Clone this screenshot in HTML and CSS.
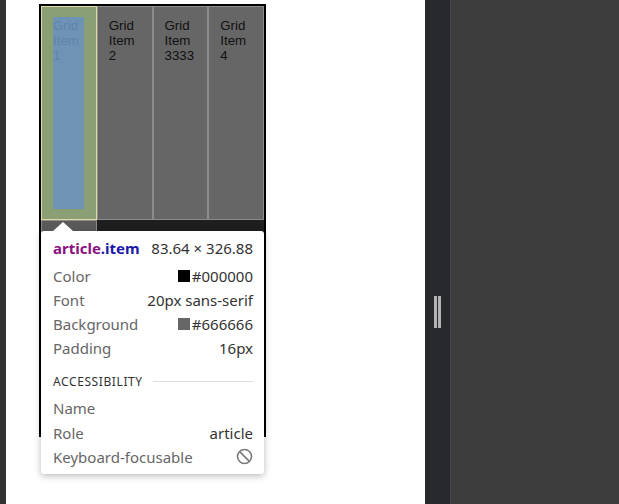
FILE: index.html
```html
<!DOCTYPE html>
<html lang="en">
<head>
<meta charset="utf-8">
<title>Grid inspector</title>
<link rel="stylesheet" href="styles.css">
</head>
<body>
<div class="screen">
  <div class="edge"></div>
  <div class="page">
    <section class="grid">
      <article class="item item--active"><div class="content">Grid Item 1</div></article>
      <article class="item"><div class="content">Grid Item 2</div></article>
      <article class="item"><div class="content">Grid Item 3333</div></article>
      <article class="item"><div class="content">Grid Item 4</div></article>
      <article class="item item--next"></article>
    </section>
    <div class="tooltip">
      <div class="tip-head">
        <span class="selector"><span class="tag">article</span><span class="cls">.item</span></span>
        <span class="size">83.64 × 326.88</span>
      </div>
      <div class="tip-row"><span class="label">Color</span><span class="value"><i class="swatch swatch--black"></i>#000000</span></div>
      <div class="tip-row"><span class="label">Font</span><span class="value">20px sans-serif</span></div>
      <div class="tip-row"><span class="label">Background</span><span class="value"><i class="swatch swatch--gray"></i>#666666</span></div>
      <div class="tip-row"><span class="label">Padding</span><span class="value">16px</span></div>
      <div class="tip-section"><span class="section-title">Accessibility</span><span class="rule"></span></div>
      <div class="tip-row tip-row--a11y"><span class="label">Name</span><span class="value"></span></div>
      <div class="tip-row"><span class="label">Role</span><span class="value">article</span></div>
      <div class="tip-row"><span class="label">Keyboard-focusable</span><span class="value">
        <svg class="no-icon" width="17" height="17" viewBox="0 0 17 17" aria-hidden="true">
          <circle cx="8.5" cy="8.5" r="7" fill="none" stroke="#7a7a7a" stroke-width="1.6"/>
          <line x1="3.6" y1="3.6" x2="13.4" y2="13.4" stroke="#7a7a7a" stroke-width="1.6"/>
        </svg>
      </span></div>
    </div>
  </div>
  <div class="splitter"><div class="handle"></div></div>
  <div class="devtools"></div>
</div>
</body>
</html>
```

FILE: styles.css
```css
* { box-sizing: border-box; }

html, body {
  margin: 0;
  padding: 0;
  width: 619px;
  height: 504px;
  overflow: hidden;
}

.screen {
  display: flex;
  width: 619px;
  height: 504px;
}

.edge {
  flex: 0 0 6px;
  background: #333333;
}

.page {
  flex: 0 0 419px;
  position: relative;
  background: #ffffff;
  padding: 4px 0 0 33px;
}

.grid {
  width: 227px;
  height: 433px;
  border: 2px solid #000000;
  background: #1e1e1e;
  display: grid;
  grid-template-columns: repeat(4, 1fr);
  grid-template-rows: 214px 1fr;
}

.item {
  border: 1px solid #8c8c8c;
  background: #666666;
  padding: 10px 12px 10px 11px;
  font-family: "Liberation Sans", Arial, sans-serif;
  font-size: 13.3px;
  line-height: 15px;
  color: #111111;
}

.content {
  height: 100%;
  padding-top: 1px;
}

.item--active {
  background: #8a9f74;
  border-color: #e2d9a2;
}

.item--active .content {
  background: #6f93b5;
  color: #5e84ad;
}

.item--next {
  background: #5a5a5a;
}

.tooltip {
  position: absolute;
  left: 35px;
  top: 231px;
  width: 223px;
  background: #ffffff;
  border-radius: 3px;
  box-shadow: 0 2px 7px rgba(0, 0, 0, 0.28);
  padding: 5px 11px 5px 12px;
  font-family: "Noto Sans", "Open Sans", sans-serif;
  font-size: 15px;
  color: #333333;
}

.tooltip::before {
  content: "";
  position: absolute;
  top: -9px;
  left: 12px;
  border-left: 10px solid transparent;
  border-right: 10px solid transparent;
  border-bottom: 9px solid #ffffff;
}

.tip-head,
.tip-row {
  display: flex;
  justify-content: space-between;
  align-items: center;
  height: 24px;
  white-space: nowrap;
}

.tip-head {
  margin-bottom: 4px;
}

.selector {
  font-weight: 700;
}

.tag { color: #881280; }
.cls { color: #1a1aa6; }

.size { color: #333333; }

.label { color: #666666; }

.value {
  display: flex;
  align-items: center;
  color: #333333;
}

.swatch {
  display: inline-block;
  width: 12px;
  height: 12px;
  margin-right: 2px;
}

.swatch--black { background: #000000; }
.swatch--gray { background: #666666; }

.tip-section {
  display: flex;
  align-items: center;
  height: 20px;
  margin-top: 11px;
}

.section-title {
  font-size: 12px;
  text-transform: uppercase;
  letter-spacing: 0.6px;
  color: #333333;
}

.rule {
  flex: 1;
  height: 1px;
  background: #dddddd;
  margin-left: 10px;
}

.tip-row--a11y {
  margin-top: 5px;
  height: 24.5px;
}

.no-icon {
  display: block;
}

.splitter {
  flex: 0 0 26px;
  background: #28292c;
  display: flex;
  align-items: center;
  padding-left: 9px;
  border-right: 1px solid #45464a;
}

.handle {
  width: 7px;
  height: 32px;
  margin-top: 120px;
  border-left: 3px solid #b4b4b4;
  border-right: 3px solid #b4b4b4;
}

.devtools {
  flex: 1;
  background: #3c3c3c;
}
```
